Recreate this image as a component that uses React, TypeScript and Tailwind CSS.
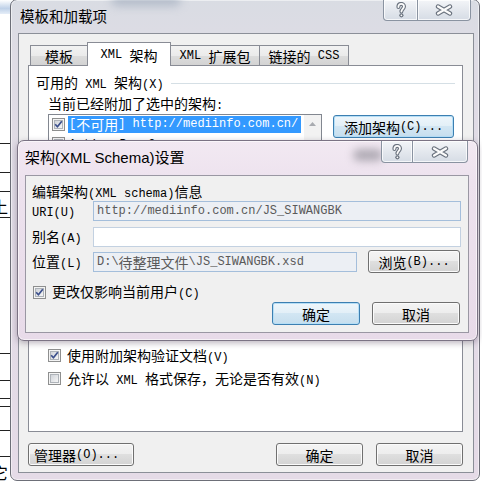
import React from "react";

const CJK_RE = /[\u2e80-\u9fff\uff00-\uffef\u3000-\u303f]/;
const SPLIT_RE = /[\u2e80-\u9fff\uff00-\uffef\u3000-\u303f]+|[^\u2e80-\u9fff\uff00-\uffef\u3000-\u303f]+/g;

function Mx({ s }: { s: string }) {
  const parts = s.match(SPLIT_RE) || [];
  return (
    <>
      {parts.map((p, i) =>
        CJK_RE.test(p) ? (
          <span key={i} className="font-['Noto_Sans_CJK_SC',sans-serif] text-[14px]">
            {p}
          </span>
        ) : (
          <span key={i} className="font-['Liberation_Mono',monospace] text-[12px] whitespace-pre">
            {p}
          </span>
        )
      )}
    </>
  );
}

function Check({ on }: { on?: boolean }) {
  const id = "g" + React.useId().replace(/[^a-zA-Z0-9]/g, "");
  return (
    <svg width="13" height="13" viewBox="0 0 13 13" className="shrink-0 block">
      <defs>
        <linearGradient id={id} x1="0" y1="0" x2="1" y2="1">
          <stop offset="0" stopColor="#cdd1d7" />
          <stop offset="1" stopColor="#f8f8f8" />
        </linearGradient>
      </defs>
      <rect x="0.5" y="0.5" width="12" height="12" fill="#f4f4f4" stroke="#8e8f8f" />
      <rect x="2.5" y="2.5" width="8" height="8" fill={`url(#${id})`} stroke="#aeb3b9" />
      {on && (
        <path
          d="M3.2 6.3 L5.4 8.8 L9.8 3.3"
          fill="none"
          stroke="#3b4f8c"
          strokeWidth="1.7"
          strokeLinejoin="round"
        />
      )}
    </svg>
  );
}

function Btn({ children, cls, focus }: { children: React.ReactNode; cls: string; focus?: boolean }) {
  return (
    <div
      className={`${cls} h-[23px] shrink-0 rounded-[3px] border flex items-center justify-center leading-[18px] text-black ${
        focus
          ? "border-[#3c7fb1] bg-[linear-gradient(#eef6fb_0%,#e2eff7_50%,#d2e6f3_50%,#c6deee_100%)] shadow-[inset_0_0_0_1px_#b5def6]"
          : "border-[#707070] bg-[linear-gradient(#f4f4f4_0%,#ededed_50%,#dfdfdf_50%,#d3d3d3_100%)] shadow-[inset_0_0_0_1px_#fbfbfb]"
      }`}
    >
      {children}
    </div>
  );
}

function QIcon() {
  const d = "M3.4 5 C3.4 2.9 4.7 1.9 6.2 1.9 C7.8 1.9 9 3 9 4.5 C9 6.7 6.4 7 6.4 9.6";
  return (
    <svg width="12" height="16" viewBox="0 0 12 16" className="block">
      <path d={d} stroke="#6a727e" strokeWidth="4" fill="none" strokeLinecap="round" />
      <circle cx="6.4" cy="13.3" r="2.1" fill="#6a727e" />
      <path d={d} stroke="#fbfbfb" strokeWidth="1.8" fill="none" strokeLinecap="round" />
      <circle cx="6.4" cy="13.3" r="0.9" fill="#fbfbfb" />
    </svg>
  );
}

function XIcon() {
  const d = "M4 2.5 L16 9.5 M16 2.5 L4 9.5";
  return (
    <svg width="20" height="12" viewBox="0 0 20 12" className="block">
      <path d={d} stroke="#6a727e" strokeWidth="4.4" strokeLinecap="round" />
      <path d={d} stroke="#fbfbfb" strokeWidth="2.2" strokeLinecap="round" />
    </svg>
  );
}

const capBg =
  "bg-[linear-gradient(#f3f5f8_0%,#e4e8ee_50%,#d6dce5_100%)] shadow-[inset_0_0_0_1px_rgba(255,255,255,0.75)] border-[#8a93a1] flex items-center justify-center";

export default function App() {
  return (
    <div className="relative w-[482px] h-[484px] overflow-hidden bg-white font-['Noto_Sans_CJK_SC',sans-serif]">
      {/* background document (behind windows) */}
      <div className="absolute left-0 top-0 w-[14px] h-[14px] bg-[linear-gradient(180deg,#ffffff_0%,#bfd1e8_60%,#e6eef8_100%)]" />
      <div className="absolute left-0 top-[143px] w-[12px] h-px bg-[#222]" />
      <div className="absolute left-0 top-[172px] w-[12px] h-px bg-[#222]" />
      <div className="absolute left-0 top-[191px] w-[12px] h-px bg-[#222]" />
      <div className="absolute left-0 top-[217px] w-[12px] h-px bg-[#222]" />
      <div className="absolute left-[-8px] top-[196px] text-[16px] leading-[20px] text-black">上</div>
      <div className="absolute left-0 top-[353px] w-[12px] h-px bg-[#222]" />
      <div className="absolute left-0 top-[380px] w-[12px] h-px bg-[#222]" />
      <div className="absolute left-0 top-[398px] w-[12px] h-px bg-[#222]" />
      <div className="absolute left-0 top-[406px] w-[12px] h-px bg-[#222]" />
      <div className="absolute left-0 top-[430px] w-[12px] h-px bg-[#222]" />
      <div className="absolute left-0 top-[456px] w-[12px] h-px bg-[#222]" />
      <div className="absolute left-[-8px] top-[462px] text-[16px] leading-[20px] text-black">它</div>

      {/* outer window */}
      <div className="absolute left-[10px] top-[-1px] w-[470px] h-[482px] rounded-[7px] border border-[#6d6f78] bg-[linear-gradient(180deg,#d9dce3_0px,#dfdce5_60px,#e5dbe7_100%)] shadow-[inset_0_0_0_1px_rgba(255,255,255,0.5)] flex flex-col">
        <div className="relative h-[33px] shrink-0 flex items-start">
          <div className="absolute left-[100px] top-[-6px] w-[70px] h-[12px] rounded-full bg-[#8d9bb0] opacity-50 blur-[5px]" />
          <div className="relative mt-[6px] ml-[9px] leading-[20px] text-[14.5px] text-black">模板和加载项</div>
          <div className="relative ml-auto mr-[8px] flex">
            <div className={`w-[35px] h-[21px] border border-t-0 rounded-bl-[4px] ${capBg}`}>
              <QIcon />
            </div>
            <div className={`w-[53px] h-[21px] border border-t-0 border-l-0 rounded-br-[4px] ${capBg}`}>
              <XIcon />
            </div>
          </div>
        </div>

        {/* client */}
        <div className="ml-[7px] mr-[5px] mb-[7px] flex-1 border border-[#8b8f98] bg-[#f0f0f0] flex flex-col">
          {/* tabs */}
          <div className="relative z-10 mt-[8px] ml-[11px] h-[23px] flex items-end">
            <div className="w-[58px] h-[20px] border border-b-0 border-[#898c95] bg-[linear-gradient(#f2f2f2_0%,#ebebeb_50%,#dddddd_50%,#d3d3d3_100%)] flex items-center justify-center leading-[18px] text-black">
              <Mx s="模板" />
            </div>
            <div className="w-[84px] h-[24px] -mb-px -ml-px border border-b-0 border-[#898c95] bg-white flex items-center justify-center leading-[18px] text-black">
              <Mx s="XML 架构" />
            </div>
            <div className="w-[90px] h-[20px] -ml-px border border-b-0 border-[#898c95] bg-[linear-gradient(#f2f2f2_0%,#ebebeb_50%,#dddddd_50%,#d3d3d3_100%)] flex items-center justify-center leading-[18px] text-black">
              <Mx s="XML 扩展包" />
            </div>
            <div className="w-[90px] h-[20px] -ml-px border border-b-0 border-[#898c95] bg-[linear-gradient(#f2f2f2_0%,#ebebeb_50%,#dddddd_50%,#d3d3d3_100%)] flex items-center justify-center leading-[18px] text-black">
              <Mx s="链接的 CSS" />
            </div>
          </div>

          {/* tab panel */}
          <div className="ml-[9px] mr-[10px] h-[367px] border border-[#898c95] bg-white flex flex-col text-black">
            <div className="mt-[8px] h-[18px] pl-[7px] flex items-center leading-[18px]">
              <div className="shrink-0">
                <Mx s="可用的 XML 架构(X)" />
              </div>
              <div className="ml-[7px] mr-[7px] flex-1 h-px bg-[#d5dfe5]" />
            </div>
            <div className="mt-px h-[18px] pl-[19px] leading-[18px]">
              <Mx s="当前已经附加了选中的架构:" />
            </div>
            <div className="mt-[3px] pl-[19px] flex items-start">
              <div className="w-[274px] h-[200px] border border-[#828790] bg-white flex overflow-hidden">
                <div className="w-[255px] shrink-0 flex flex-col">
                  <div className="h-[19px] flex items-center pl-[3px]">
                    <Check on />
                    <div className="ml-[3px] w-[233px] h-[17px] bg-[#3399ff] text-white flex items-center pl-px leading-[17px] overflow-hidden whitespace-nowrap">
                      <Mx s="[不可用] http://mediinfo.com.cn/" />
                    </div>
                  </div>
                  <div className="h-[19px] flex items-center pl-[3px]">
                    <Check />
                    <div className="ml-[4px] leading-[17px]">
                      <Mx s="ActionsPane3" />
                    </div>
                  </div>
                </div>
                <div className="w-[17px] shrink-0 bg-[#f2f2f2] flex flex-col items-center">
                  <div className="h-[17px] flex items-center justify-center">
                    <svg width="7" height="4" viewBox="0 0 7 4" className="block">
                      <polygon points="0,4 3.5,0 7,4" fill="#a8abb0" />
                    </svg>
                  </div>
                </div>
              </div>
              <div className="ml-[11px] mt-px flex flex-col">
                <Btn cls="w-[121px] h-[22px]" focus>
                  <Mx s="添加架构(C)..." />
                </Btn>
              </div>
            </div>
            <div className="mt-[30px] h-[23px] pl-[19px] flex items-center leading-[18px]">
              <Check on />
              <div className="ml-[6px]">
                <Mx s="使用附加架构验证文档(V)" />
              </div>
            </div>
            <div className="h-[23px] pl-[19px] flex items-center leading-[18px]">
              <Check />
              <div className="ml-[6px]">
                <Mx s="允许以 XML 格式保存，无论是否有效(N)" />
              </div>
            </div>
          </div>

          {/* bottom buttons */}
          <div className="mt-[11px] ml-[9px] mr-[10px] flex">
            <Btn cls="w-[106px] justify-start pl-[5px]">
              <Mx s="管理器(O)..." />
            </Btn>
            <Btn cls="ml-auto w-[87px]">
              <Mx s="确定" />
            </Btn>
            <Btn cls="ml-[13px] w-[87px]">
              <Mx s="取消" />
            </Btn>
          </div>
        </div>
      </div>

      {/* inner dialog */}
      <div className="absolute left-[17px] top-[140px] w-[461px] h-[201px] rounded-[7px] border border-[#7b7384] bg-[linear-gradient(180deg,#f2e9f2_0px,#ede2ee_40px,#e8dbe9_100%)] shadow-[inset_0_0_0_1px_rgba(255,255,255,0.6),0_2px_6px_rgba(60,40,70,0.35)] flex flex-col">
        <div className="relative h-[34px] shrink-0 flex items-start">
          <div className="absolute left-[335px] top-[8px] w-[30px] h-[12px] rounded-full bg-[#6f6f78] opacity-50 blur-[4px]" />
          <div className="relative mt-[8px] ml-[7px] leading-[18px] text-[15px] text-black font-['Liberation_Sans','Noto_Sans_CJK_SC',sans-serif]">
            架构(XML Schema)设置
          </div>
          <div className="relative ml-auto mr-[9px] flex">
            <div className={`w-[32px] h-[22px] border border-t-0 rounded-bl-[4px] ${capBg}`}>
              <QIcon />
            </div>
            <div className={`w-[55px] h-[22px] border border-t-0 border-l-0 rounded-br-[4px] ${capBg}`}>
              <XIcon />
            </div>
          </div>
        </div>

        <div className="ml-[7px] mr-[8px] mb-[7px] flex-1 border border-[#9a97a3] bg-[#f0f0f0] flex flex-col text-black">
          <div className="mt-[5px] h-[18px] pl-[6px] leading-[18px]">
            <Mx s="编辑架构(XML schema)信息" />
          </div>
          <div className="mt-[2px] h-[20px] pl-[6px] pr-[7px] flex items-center">
            <div className="w-[61px] leading-[18px]">
              <Mx s="URI(U)" />
            </div>
            <div className="flex-1 h-[20px] border border-[#a4bedb] bg-[#eceff4] flex items-center pl-[3px] leading-[18px] text-[#5a5a5a]">
              <Mx s="http://mediinfo.com.cn/JS_SIWANGBK" />
            </div>
          </div>
          <div className="mt-[6px] h-[20px] pl-[6px] pr-[7px] flex items-center">
            <div className="w-[61px] leading-[18px]">
              <Mx s="别名(A)" />
            </div>
            <div className="flex-1 h-[20px] border border-[#c3d1e1] bg-white" />
          </div>
          <div className="mt-[3px] h-[23px] pl-[6px] pr-[8px] flex items-center">
            <div className="w-[61px] leading-[18px]">
              <Mx s="位置(L)" />
            </div>
            <div className="w-[264px] h-[20px] border border-[#a4bedb] bg-[#eceff4] flex items-center pl-[3px] leading-[18px] text-[#5a5a5a] overflow-hidden whitespace-nowrap">
              <Mx s="D:\待整理文件\JS_SIWANGBK.xsd" />
            </div>
            <Btn cls="ml-auto w-[92px]">
              <Mx s="浏览(B)..." />
            </Btn>
          </div>
          <div className="mt-[10px] h-[18px] pl-[7px] flex items-center leading-[18px]">
            <Check on />
            <div className="ml-[6px]">
              <Mx s="更改仅影响当前用户(C)" />
            </div>
          </div>
          <div className="mt-px pr-[8px] flex justify-end">
            <Btn cls="w-[88px]" focus>
              <Mx s="确定" />
            </Btn>
            <Btn cls="ml-[12px] w-[88px]">
              <Mx s="取消" />
            </Btn>
          </div>
        </div>
      </div>
    </div>
  );
}
